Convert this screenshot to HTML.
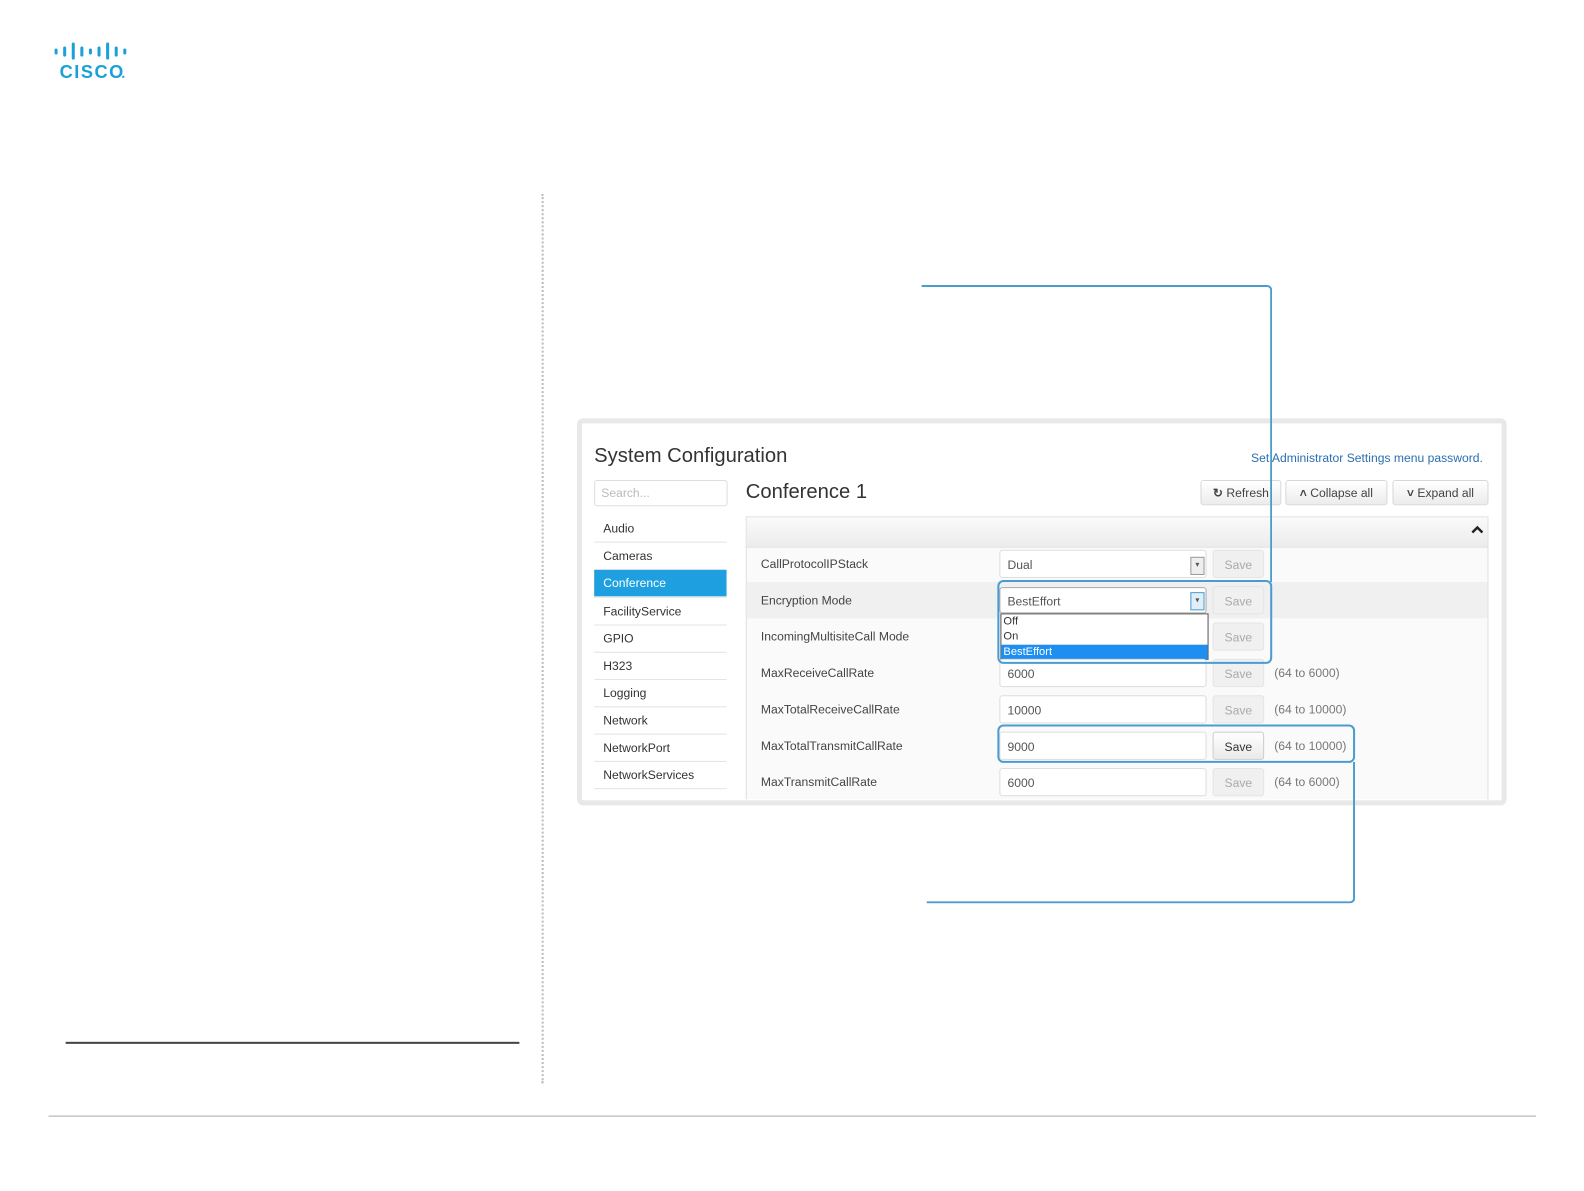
<!DOCTYPE html>
<html><head><meta charset="utf-8"><style>
html,body{margin:0;padding:0;background:#fff;width:1584px;height:1191px;overflow:hidden;font-family:"Liberation Sans",Arial,sans-serif}
#w{position:absolute;left:0;top:0;width:1568px;height:1179px;transform:scale(1.0105);transform-origin:0 0}
.a{position:absolute}
.side div{position:absolute;left:588px;width:131px;height:26px;line-height:26px;font-size:12px;color:#333;border-bottom:1px solid #e3e3e3;text-indent:9px}
.lbl{position:absolute;left:753px;font-size:12px;color:#444}
.inp{position:absolute;left:989px;width:205px;height:28px;border:1px solid #ddd;border-radius:3px;background:#fff;font-size:12px;color:#555;line-height:28px;text-indent:7px;box-sizing:border-box}
.sv{position:absolute;left:1200px;width:51px;height:28px;border:1px solid #e4e4e4;border-radius:3px;background:#f0f0f0;color:#aaa;font-size:12px;text-align:center;line-height:28px;box-sizing:border-box}
.rg{position:absolute;left:1261px;font-size:12px;color:#777}
.btn{position:absolute;top:475px;height:25px;border:1px solid #d8d8d8;border-radius:3px;background:linear-gradient(#fff,#ececec);font-size:12px;color:#444;line-height:24px;text-align:center;box-sizing:border-box}
</style></head><body><div id="w">
<svg class="a" style="left:53px;top:40px" width="74" height="40">
<g fill="#1ba0d7">
<rect x="1" y="8" width="3" height="6" rx="1.5"/>
<rect x="9.5" y="6" width="3" height="10" rx="1.5"/>
<rect x="18" y="2" width="3" height="17" rx="1.5"/>
<rect x="26.5" y="6" width="3" height="10" rx="1.5"/>
<rect x="35" y="8" width="3" height="6" rx="1.5"/>
<rect x="43.5" y="6" width="3" height="10" rx="1.5"/>
<rect x="52" y="2" width="3" height="17" rx="1.5"/>
<rect x="60.5" y="6" width="3" height="10" rx="1.5"/>
<rect x="69" y="8" width="3" height="6" rx="1.5"/>
</g>
<text x="6" y="37" font-family="Liberation Sans" font-weight="bold" font-size="18" fill="#1ba0d7" letter-spacing="1.5">CISCO</text>
<rect x="68" y="35" width="2" height="2" fill="#1ba0d7"/>
</svg>
<div class="a" style="left:536px;top:192px;width:0;height:880px;border-left:2px dotted #bbb"></div>
<div class="a" style="left:65px;top:1031px;width:449px;height:2px;background:#444"></div>
<div class="a" style="left:48px;top:1104px;width:1472px;height:1px;background:#aaa"></div>

<div class="a" style="left:571px;top:414px;width:910px;height:373px;border:5px solid #e8e8e8;border-radius:6px;background:#fff"></div>
<div class="a" style="left:588px;top:440px;font-size:20px;color:#333">System Configuration</div>
<div class="a" style="left:1238px;top:446px;font-size:12px;color:#2a6fb0">Set Administrator Settings menu password.</div>
<div class="a" style="left:588px;top:475px;width:132px;height:26px;border:1px solid #ddd;border-radius:3px;box-sizing:border-box;font-size:12px;color:#bbb;line-height:24px;text-indent:6px">Search...</div>
<div class="side">
<div style="top:510px">Audio</div>
<div style="top:537px">Cameras</div>
<div style="top:564px;background:#1ea0e0;color:#fff">Conference</div>
<div style="top:592px">FacilityService</div>
<div style="top:619px">GPIO</div>
<div style="top:646px">H323</div>
<div style="top:673px">Logging</div>
<div style="top:700px">Network</div>
<div style="top:727px">NetworkPort</div>
<div style="top:754px">NetworkServices</div>
</div>
<div class="a" style="left:738px;top:476px;font-size:20px;color:#333">Conference 1</div>
<div class="btn" style="left:1188px;width:80px"><b>&#x21bb;</b> Refresh</div>
<div class="btn" style="left:1272px;width:101px"><b>&#x2c4;</b> Collapse all</div>
<div class="btn" style="left:1378px;width:95px"><b>&#x2c5;</b> Expand all</div>
<div class="a" style="left:738px;top:511px;width:735px;height:280px;border:1px solid #e0e0e0;border-bottom:none;background:#fafafa;box-sizing:border-box"></div>
<div class="a" style="left:739px;top:512px;width:733px;height:29px;background:linear-gradient(#fafafa,#ececec);border-bottom:1px solid #e0e0e0"></div>
<svg class="a" style="left:1456px;top:519px" width="12" height="10"><path d="M1 8 L6 3 L11 8" stroke="#222" stroke-width="2.4" fill="none"/></svg>
<div class="a" style="left:739px;top:576px;width:733px;height:36px;background:#f0f0f0"></div>

<div class="lbl" style="top:551px">CallProtocolIPStack</div>
<div class="lbl" style="top:587px">Encryption Mode</div>
<div class="lbl" style="top:623px">IncomingMultisiteCall Mode</div>
<div class="lbl" style="top:659px">MaxReceiveCallRate</div>
<div class="lbl" style="top:695px">MaxTotalReceiveCallRate</div>
<div class="lbl" style="top:731px">MaxTotalTransmitCallRate</div>
<div class="lbl" style="top:767px">MaxTransmitCallRate</div>

<div class="inp" style="top:544px">Dual<span class="a" style="left:188px;top:6px;width:12px;height:16px;border:1px solid #999;background:#eee;text-indent:0;line-height:14px;font-size:8px;text-align:center">&#9662;</span></div>
<div class="inp" style="top:581px;height:26px;line-height:26px;border-color:#aaa">BestEffort<span class="a" style="left:188px;top:4px;width:12px;height:16px;border:1px solid #4a9cd0;background:#e0eef8;text-indent:0;line-height:14px;font-size:8px;text-align:center">&#9662;</span></div>
<div class="a" style="left:990px;top:607px;width:206px;height:46px;border:1px solid #555;background:#fff;box-sizing:border-box;font-size:11px;color:#333;line-height:15px">
<div style="padding-left:2px">Off</div><div style="padding-left:2px">On</div><div style="background:#1e8ff0;color:#fff;padding-left:2px">BestEffort</div></div>
<div class="inp" style="top:652px">6000</div>
<div class="inp" style="top:688px">10000</div>
<div class="inp" style="top:724px">9000</div>
<div class="inp" style="top:760px">6000</div>

<div class="sv" style="top:544px">Save</div>
<div class="sv" style="top:580px">Save</div>
<div class="sv" style="top:616px">Save</div>
<div class="sv" style="top:652px">Save</div>
<div class="sv" style="top:688px">Save</div>
<div class="sv" style="top:724px;color:#333;background:linear-gradient(#fff,#eaeaea);border-color:#ccc">Save</div>
<div class="sv" style="top:760px">Save</div>
<div class="rg" style="top:659px">(64 to 6000)</div>
<div class="rg" style="top:695px">(64 to 10000)</div>
<div class="rg" style="top:731px">(64 to 10000)</div>
<div class="rg" style="top:767px">(64 to 6000)</div>

<div class="a" style="left:912px;top:282px;width:347px;height:294px;border-top:2px solid #4a9cd0;border-right:2px solid #4a9cd0;border-top-right-radius:5px;box-sizing:border-box"></div>
<div class="a" style="left:987px;top:574px;width:272px;height:83px;border:2px solid #4a9cd0;border-radius:6px;box-sizing:border-box"></div>
<div class="a" style="left:987px;top:717px;width:354px;height:38px;border:2px solid #4a9cd0;border-radius:6px;box-sizing:border-box"></div>
<div class="a" style="left:917px;top:754px;width:424px;height:140px;border-bottom:2px solid #4a9cd0;border-right:2px solid #4a9cd0;border-bottom-right-radius:5px;box-sizing:border-box"></div>
</div></body></html>
